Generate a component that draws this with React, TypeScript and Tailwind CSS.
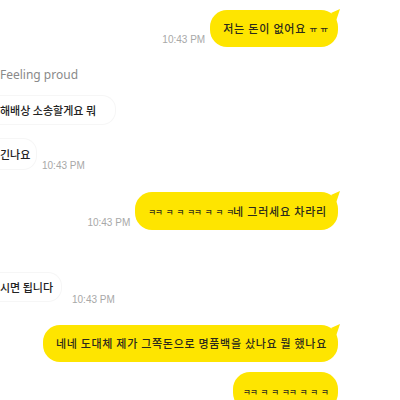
import type { ReactNode } from "react";

const kr = { fontFamily: '"Noto Sans CJK KR", "Noto Sans", sans-serif' };

const Time = ({ className = "" }: { className?: string }) => (
  <span
    className={`text-[10px] leading-[12px] text-[#a8a8a8] whitespace-nowrap ${className}`}
    style={{ fontFamily: '"Liberation Sans", Arial, sans-serif' }}
  >
    10:43 PM
  </span>
);

const Tail = () => (
  <svg
    className="absolute -right-[3px] -top-[1px]"
    width="10"
    height="12"
    viewBox="0 0 10 12"
  >
    <path d="M0 4 L9 0 L5 12 Z" fill="#fee500" />
  </svg>
);

// small jamo (ㅋ, ㅠ) are drawn narrower in the screenshot
const J = ({ children }: { children: ReactNode }) => (
  <span className="text-[8.5px] tracking-[-1px] [word-spacing:3px] whitespace-pre">{children}</span>
);

interface BubbleProps {
  children: ReactNode;
  tail?: boolean;
  className?: string;
}

const MyBubble = ({ children, tail, className = "" }: BubbleProps) => (
  <div
    className={`relative flex items-center bg-[#fee500] rounded-[17px] pl-[13px] pr-[11px] text-[11px] font-medium text-[#2b2a1c] whitespace-nowrap ${className}`}
    style={kr}
  >
    {tail && <Tail />}
    {children}
  </div>
);

const OtherBox = ({ text, className = "" }: { text: string; className?: string }) => (
  <div
    className={`flex items-center border border-[#f6f6f6] border-l-0 rounded-r-[14px] text-[11px] font-medium text-[#222] whitespace-nowrap ${className}`}
    style={kr}
  >
    {text}
  </div>
);

export default function App() {
  return (
    <div className="w-[400px] h-[400px] bg-white overflow-hidden">
      <div className="flex flex-col pt-[10px]">
        <div className="flex justify-end items-end gap-[5px] pr-[62px]">
          <Time className="mb-[1px]" />
          <MyBubble tail className="h-[37px] tracking-[0.8px]">
            저는 돈이 없어요&nbsp;<J>ㅠ ㅠ</J>
          </MyBubble>
        </div>

        <div
          className="mt-[20px] text-[12px] leading-[16px] text-[#8a8a8a]"
          style={{ fontFamily: '"Noto Sans", sans-serif' }}
        >
          Feeling proud
        </div>

        <OtherBox text="해배상 소송할게요 뭐" className="mt-[12px] h-[30px] w-[116px]" />

        <div className="flex items-end mt-[13px]">
          <OtherBox text="긴나요" className="h-[32px] w-[37px]" />
          <Time className="ml-[5px] -mb-[2px]" />
        </div>

        <div className="flex justify-end items-end gap-[5px] pr-[62px] mt-[22px]">
          <Time className="mb-[1px]" />
          <MyBubble tail className="h-[38px]">
            <J>ㅋㅋ ㅋ ㅋ ㅋㅋ ㅋ ㅋ ㅋ</J>
            <span className="tracking-[0.8px]">네 그러세요 차라리</span>
          </MyBubble>
        </div>

        <div className="flex items-end mt-[42px]">
          <OtherBox text="시면 됩니다" className="h-[30px] w-[62px]" />
          <Time className="ml-[10px] -mb-[4px]" />
        </div>

        <div className="flex justify-end pr-[62px] mt-[23px]">
          <MyBubble tail className="h-[37px] tracking-[0.7px]">
            네네 도대체 제가 그쪽돈으로 명품백을 샀나요 뭘 했나요
          </MyBubble>
        </div>

        <div className="flex justify-end pr-[62px] mt-[10px]">
          <MyBubble className="h-[38px] w-[105px] justify-center !px-0">
            <J>ㅋㅋ ㅋ ㅋ ㅋㅋ ㅋ ㅋ ㅋ</J>
          </MyBubble>
        </div>
      </div>
    </div>
  );
}
